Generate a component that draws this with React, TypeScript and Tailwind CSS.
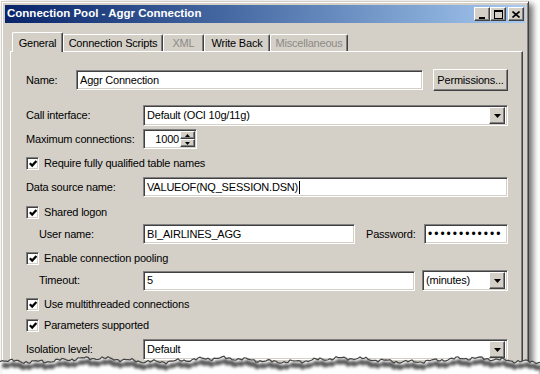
import React from 'react'

const raised =
  'bg-[#d4d0c8] border border-t-white border-l-white border-r-[#404040] border-b-[#404040] shadow-[inset_-1px_-1px_0_#808080]'
const sunken =
  'bg-white border border-t-[#808080] border-l-[#808080] border-r-white border-b-white shadow-[inset_1px_1px_0_#404040,inset_-1px_-1px_0_#d4d0c8]'

function Field({ value, className = '', children }: { value?: string; className?: string; children?: React.ReactNode }) {
  return (
    <div className={`${sunken} flex h-[20px] items-center pl-[3px] text-black ${className}`}>
      {value}
      {children}
    </div>
  )
}

function DropArrow() {
  return (
    <div className={`${raised} flex h-[17px] w-[16px] shrink-0 items-center justify-center`}>
      <svg width="7" height="4" viewBox="0 0 7 4">
        <path d="M0 0h7L3.5 4z" fill="#000" />
      </svg>
    </div>
  )
}

function Select({ value, className = '' }: { value: string; className?: string }) {
  return (
    <div className={`${sunken} flex h-[21px] items-center justify-between pl-[3px] pr-[2px] ${className}`}>
      <span>{value}</span>
      <DropArrow />
    </div>
  )
}

function Check({ label }: { label: string }) {
  return (
    <div className="flex h-[13px] items-center">
      <span className={`${sunken} flex h-[13px] w-[13px] items-center justify-center`}>
        <svg width="8" height="8" viewBox="0 0 8 8">
          <path d="M0.8 3.2l2.4 2.4 4.2-4.6" stroke="#000" strokeWidth="2.2" fill="none" />
        </svg>
      </span>
      <span className="ml-[5px]">{label}</span>
    </div>
  )
}

function Label({ children, indent }: { children: React.ReactNode; indent?: boolean }) {
  return <span className={indent ? 'ml-[13px] w-[104px] shrink-0' : 'w-[117px] shrink-0'}>{children}</span>
}

function TornEdge() {
  const pts: string[] = []
  for (let x = 0; x <= 540; x += 2) {
    const y =
      10 +
      1.8 * Math.sin(x * 0.05) +
      1.1 * Math.sin(x * 0.27 + 1) +
      0.8 * Math.sin(x * 0.83 + 2) +
      0.5 * Math.sin(x * 1.9)
    pts.push(`${x},${y.toFixed(1)}`)
  }
  const edge = 'M' + pts.join(' L')
  return (
    <svg className="absolute left-0 top-[350px]" width="540" height="24" viewBox="0 0 540 24">
      <defs>
        <filter id="blur" x="-5%" y="-50%" width="110%" height="200%">
          <feGaussianBlur stdDeviation="1.6" />
        </filter>
      </defs>
      <path d={`${edge} L540,24 L0,24 Z`} fill="#fff" />
      <path d={`${edge} L540,24 L0,24 Z`} fill="#2a2a2a" filter="url(#blur)" transform="translate(2,2)" opacity="0.8" />
      <path d={`${edge} L540,24 L0,24 Z`} fill="#fff" transform="translate(0,7)" filter="url(#blur)" />
      <path d={edge} stroke="#444" strokeWidth="1.2" fill="none" />
    </svg>
  )
}

function TitleButton({ children, className = '' }: { children: React.ReactNode; className?: string }) {
  return (
    <div className={`${raised} flex h-[14px] w-[16px] items-center justify-center ${className}`}>{children}</div>
  )
}

const tab =
  'flex h-[17px] items-center justify-center rounded-t-[2px] border border-b-0 border-t-white border-l-white border-r-[#404040] shadow-[inset_-1px_0_0_#808080]'

export default function App() {
  return (
    <div className="relative h-[374px] w-[540px] overflow-hidden bg-white font-['Liberation_Sans',Arial,sans-serif] text-[11px] tracking-[-0.2px] text-black">
      <div className="ml-px mt-px h-[373px] w-[528px] border border-t-[#d4d0c8] border-l-[#d4d0c8] border-r-[#404040] border-b-[#404040] bg-[#d4d0c8] p-[3px] shadow-[inset_1px_1px_0_#fff,inset_-1px_0_0_#808080,4px_3px_6px_rgba(0,0,0,0.55)]">
        {/* title bar */}
        <div className="flex h-[18px] items-center justify-between bg-gradient-to-r from-[#0a246a] to-[#a6caf0] pl-[2px] pr-[1px]">
          <span className="text-[11.5px] font-bold tracking-normal text-white">Connection Pool - Aggr Connection</span>
          <div className="flex items-center">
            <TitleButton>
              <span className="mt-[7px] h-[2px] w-[6px] bg-black" />
            </TitleButton>
            <TitleButton>
              <span className="h-[9px] w-[9px] border border-t-2 border-black" />
            </TitleButton>
            <TitleButton className="ml-[2px]">
              <svg width="8" height="7" viewBox="0 0 8 7">
                <path d="M0.5 0.5l7 6M7.5 0.5l-7 6" stroke="#000" strokeWidth="1.6" />
              </svg>
            </TitleButton>
          </div>
        </div>

        {/* tabs */}
        <div className="ml-[7px] mt-[9px] flex h-[19px] items-end">
          <div className="relative z-10 -mb-px flex h-[20px] w-[51px] items-center justify-center rounded-t-[2px] border border-b-0 border-t-white border-l-white border-r-[#404040] bg-[#d4d0c8] pt-[1px] shadow-[inset_-1px_0_0_#808080]">
            General
          </div>
          <div className={`${tab} w-[100px]`}>Connection Scripts</div>
          <div className={`${tab} w-[41px] text-[#8c8a86]`}>XML</div>
          <div className={`${tab} w-[66px]`}>Write Back</div>
          <div className={`${tab} w-[78px] text-[#8c8a86]`}>Miscellaneous</div>
        </div>

        {/* panel */}
        <div className="ml-[5px] mr-[2px] h-[320px] border border-b-0 border-t-white border-l-white border-r-[#404040] pl-[15px] pr-[14px] pt-[17px] shadow-[inset_-1px_0_0_#808080]">
          <div className="flex h-[22px] items-center">
            <span className="w-[50px] shrink-0">Name:</span>
            <Field value="Aggr Connection" className="w-[347px]" />
            <button className={`${raised} ml-[10px] h-[22px] w-[75px] text-[11px]`}>Permissions...</button>
          </div>

          <div className="mt-[14px] flex items-center">
            <Label>Call interface:</Label>
            <Select value="Default (OCI 10g/11g)" className="flex-1" />
          </div>

          <div className="mt-[3px] flex items-center">
            <Label>Maximum connections:</Label>
            <div className={`${sunken} flex h-[20px] w-[54px] items-center justify-end pr-[1px]`}>
              <span className="mr-px">1000</span>
              <div className="flex flex-col">
                <div className={`${raised} flex h-[8px] w-[15px] items-center justify-center`}>
                  <svg width="5" height="3" viewBox="0 0 5 3"><path d="M0 3h5L2.5 0z" fill="#000" /></svg>
                </div>
                <div className={`${raised} flex h-[8px] w-[15px] items-center justify-center`}>
                  <svg width="5" height="3" viewBox="0 0 5 3"><path d="M0 0h5L2.5 3z" fill="#000" /></svg>
                </div>
              </div>
            </div>
          </div>

          <div className="mt-[8px]">
            <Check label="Require fully qualified table names" />
          </div>

          <div className="mt-[7px] flex items-center">
            <Label>Data source name:</Label>
            <Field value="VALUEOF(NQ_SESSION.DSN)" className="flex-1">
              <span className="ml-px h-[13px] w-px bg-black" />
            </Field>
          </div>

          <div className="mt-[9px]">
            <Check label="Shared logon" />
          </div>

          <div className="mt-[5px] flex items-center">
            <Label indent>User name:</Label>
            <Field value="BI_AIRLINES_AGG" className="w-[212px]" />
            <span className="ml-[11px] w-[58px] shrink-0">Password:</span>
            <Field className="flex-1 text-[12px] tracking-[2px]">{'\u2022'.repeat(12)}</Field>
          </div>

          <div className="mt-[8px]">
            <Check label="Enable connection pooling" />
          </div>

          <div className="mt-[5px] flex items-center">
            <Label indent>Timeout:</Label>
            <Field value="5" className="w-[272px]" />
            <Select value="(minutes)" className="ml-[7px] flex-1" />
          </div>

          <div className="mt-[7px]">
            <Check label="Use multithreaded connections" />
          </div>

          <div className="mt-[8px]">
            <Check label="Parameters supported" />
          </div>

          <div className="mt-[7px] flex items-center">
            <Label>Isolation level:</Label>
            <Select value="Default" className="flex-1" />
          </div>
        </div>
      </div>
      <TornEdge />
    </div>
  )
}
